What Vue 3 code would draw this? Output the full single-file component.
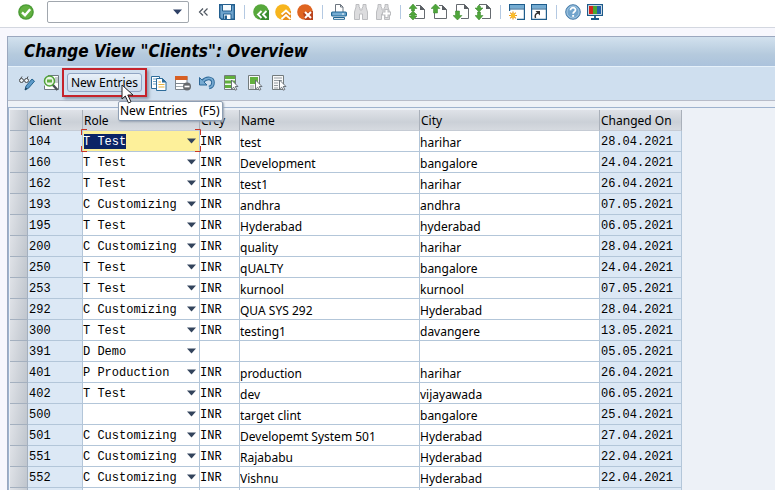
<script setup>
import { ref } from 'vue'

const command = ref('')
const roleOptions = ['', 'T Test', 'C Customizing', 'D Demo', 'P Production']

const T = 'T Test'
const C = 'C Customizing'
const rows = ref(
  [
    ['104', T, 'INR', 'test', 'harihar', '28.04.2021'],
    ['160', T, 'INR', 'Development', 'bangalore', '24.04.2021'],
    ['162', T, 'INR', 'test1', 'harihar', '26.04.2021'],
    ['193', C, 'INR', 'andhra', 'andhra', '07.05.2021'],
    ['195', T, 'INR', 'Hyderabad', 'hyderabad', '06.05.2021'],
    ['200', C, 'INR', 'quality', 'harihar', '28.04.2021'],
    ['250', T, 'INR', 'qUALTY', 'bangalore', '24.04.2021'],
    ['253', T, 'INR', 'kurnool', 'kurnool', '07.05.2021'],
    ['292', C, 'INR', 'QUA SYS 292', 'Hyderabad', '28.04.2021'],
    ['300', T, 'INR', 'testing1', 'davangere', '13.05.2021'],
    ['391', 'D Demo', '', '', '', '05.05.2021'],
    ['401', 'P Production', 'INR', 'production', 'harihar', '26.04.2021'],
    ['402', T, 'INR', 'dev', 'vijayawada', '06.05.2021'],
    ['500', '', 'INR', 'target clint', 'bangalore', '25.04.2021'],
    ['501', C, 'INR', 'Developemt System 501', 'Hyderabad', '27.04.2021'],
    ['551', C, 'INR', 'Rajababu', 'Hyderabad', '22.04.2021'],
    ['552', C, 'INR', 'Vishnu', 'Hyderabad', '22.04.2021'],
  ].map(([client, role, currency, name, city, changed]) => ({ client, role, currency, name, city, changed }))
)
</script>

<template>
  <main class="app">
    <header class="system-bar">
      <button class="icon" type="button" aria-label="Enter">
        <svg viewBox="0 0 16 16"><circle cx="8" cy="8" r="7.800" fill="#4a9b35" /><circle cx="8" cy="8" r="6.400" fill="#62b040" /><path d="M4 8.300l3 3 5.200-6" fill="none" stroke="#fff" stroke-width="2.400" /></svg>
      </button>
      <div class="command">
        <input v-model="command" type="text" aria-label="Command" />
        <button type="button" aria-label="Command history">
          <svg viewBox="0 0 9 6"><path d="M0 .5h9L4.500 5.500z" fill="#2f4166" /></svg>
        </button>
      </div>
      <button class="icon collapse" type="button" aria-label="Hide command field">
        <svg viewBox="0 0 16 16"><path d="M6 4.500L2.500 8 6 11.500M10.500 4.500L7 8l3.500 3.500" fill="none" stroke="#4d555f" stroke-width="1.200" /></svg>
      </button>
      <button class="icon" type="button" aria-label="Save">
        <svg viewBox="0 0 16 16"><path d="M.7.7h14.600v14.600H2.500L.7 13.500z" fill="#6ea3cd" stroke="#235f8f" stroke-width="1.400" /><path d="M3.500.5h9v6.500h-9z" fill="#f5fafd" stroke="#235f8f" /><path d="M4.500 10h7.500v5.500H4.500z" fill="#fff" stroke="#235f8f" /><path d="M5.500 11.500h2.500V15H5.500z" fill="#235f8f" /></svg>
      </button>
      <span class="sep"></span>
      <button class="icon" type="button" aria-label="Back">
        <svg viewBox="0 0 16 16"><circle cx="8" cy="8" r="7.800" fill="#57a83b" /><path d="M16 6v10H8A8 8 0 0 1 4 11z" fill="#398b2e" /><path d="M8.500 7L5 10.500 8.500 14M13.500 7L10 10.500l3.500 3.500" fill="none" stroke="#fff" stroke-width="1.900" /></svg>
      </button>
      <button class="icon" type="button" aria-label="Exit">
        <svg viewBox="0 0 16 16"><circle cx="8" cy="8" r="7.800" fill="#f7b51d" /><path d="M16 7v9H8l-2-6z" fill="#e98d19" /><path d="M6.500 10.500L11 6.500l4.500 4M6.500 15L11 11l4.500 4" fill="none" stroke="#fff" stroke-width="1.900" /></svg>
      </button>
      <button class="icon" type="button" aria-label="Cancel">
        <svg viewBox="0 0 16 16"><circle cx="8" cy="8" r="7.800" fill="#df6420" /><path d="M16 7v9H8l-2-7z" fill="#b9431d" /><path d="M8 8l6 6M14 8l-6 6" fill="none" stroke="#fff" stroke-width="2" /></svg>
      </button>
      <span class="sep"></span>
      <button class="icon" type="button" aria-label="Print">
        <svg viewBox="0 0 16 16"><path d="M4.500 8V.5h5l2.500 2.500V8" fill="#fff" stroke="#6d7680" /><path d="M9.500.5V3H12" fill="none" stroke="#6d7680" /><rect x=".6" y="8" width="14.800" height="4" rx="1" fill="#75acd2" stroke="#1f6593" stroke-width="1.200" /><path d="M2.500 13.500h11v1.800h-11z" fill="#fff" stroke="#1f6593" /><path d="M11 10h2" stroke="#fff" /></svg>
      </button>
      <button class="icon" type="button" aria-label="Find">
        <svg viewBox="0 0 16 16"><path d="M3 .5h3V3l1 1v2h2V4l1-1V.5h3V3l1.500 5v7.500h-5V10h-3v5.500h-5V8L3 3z" fill="#dcdcde" stroke="#bcbdc0" /></svg>
      </button>
      <button class="icon" type="button" aria-label="Find next">
        <svg viewBox="0 0 16 16"><path d="M3 .5h3V3l1 1v2h2V4l1-1V.5h3V3l1.500 5v7.500h-5V10h-3v5.500h-5V8L3 3z" fill="#dcdcde" stroke="#bcbdc0" /><path d="M11.500 5v9M7 9.500h9" stroke="#bcbdc0" stroke-width="4" /><path d="M11.500 6v7M8 9.500h7" stroke="#fff" stroke-width="2" /></svg>
      </button>
      <span class="sep"></span>
      <button class="icon" type="button" aria-label="First page">
        <svg viewBox="0 0 16 16"><path d="M7 1.500h4.500l4 4v9H6" fill="#fff" stroke="#666b70" /><path d="M11 1v5h5z" fill="#5b6065" /><path d="M4 0l4 4.500H5.500V7h-3V4.500H0zM4 7l4 4H5.500v1H8l-4 4-4-4h2.500v-1H0z" fill="#4fa63a" stroke="#37832a" stroke-width=".5" /></svg>
      </button>
      <button class="icon" type="button" aria-label="Previous page">
        <svg viewBox="0 0 16 16"><path d="M8 1.500h3.500l4 4v9h-12V9" fill="#fff" stroke="#666b70" /><path d="M11 1v5h5z" fill="#5b6065" /><path d="M4.500 0L9 4.500H6.500V9h-4V4.500H0z" fill="#4fa63a" stroke="#37832a" stroke-width=".5" /></svg>
      </button>
      <button class="icon" type="button" aria-label="Next page">
        <svg viewBox="0 0 16 16"><path d="M3.500 8V.5h8l4 4v10H8" fill="#fff" stroke="#666b70" /><path d="M11 0v5h5z" fill="#5b6065" /><path d="M4.500 16L9 11.500H6.500V7h-4v4.500H0z" fill="#4fa63a" stroke="#37832a" stroke-width=".5" /></svg>
      </button>
      <button class="icon" type="button" aria-label="Last page">
        <svg viewBox="0 0 16 16"><path d="M4 .5h7.500l4 4v10H7" fill="#fff" stroke="#666b70" /><path d="M11 0v5h5z" fill="#5b6065" /><path d="M4 1l1.500 1.500V4H8L4 8 0 4h2.500V2.500zM4 16l4-4.500H5.500V8h-3v3.500H0z" fill="#4fa63a" stroke="#37832a" stroke-width=".5" /></svg>
      </button>
      <span class="sep"></span>
      <button class="icon" type="button" aria-label="New session">
        <svg viewBox="0 0 16 16"><path d="M.6.6h14.800v14.800H.6z" fill="#fff" stroke="#1f5d8c" stroke-width="1.200" /><path d="M1 1h14v3.500H1z" fill="#75acd2" /><path d="M1 5h14" stroke="#1f5d8c" /><path d="M0 7h8v9H0z" fill="#fff" /><path d="M4 7.500v8M0 11.500h8M1.200 8.700l5.600 5.600M6.800 8.700l-5.600 5.600" stroke="#e99a22" stroke-width="1.200" /><circle cx="4" cy="11.500" r="2.300" fill="#fbbd25" /></svg>
      </button>
      <button class="icon" type="button" aria-label="Create shortcut">
        <svg viewBox="0 0 16 16"><path d="M.6.6h14.800v14.800H.6z" fill="#fff" stroke="#1f5d8c" stroke-width="1.200" /><path d="M1 1h14v3.500H1z" fill="#75acd2" /><path d="M1 5h14" stroke="#1f5d8c" /><path d="M4.500 14c-1-3 .5-5 3-5" fill="none" stroke="#333" stroke-width="1.500" /><path d="M4.500 7h4.500v4.500z" fill="#333" /></svg>
      </button>
      <span class="sep"></span>
      <button class="icon" type="button" aria-label="Help">
        <svg viewBox="0 0 16 16"><circle cx="8" cy="8" r="7.300" fill="#71a4cc" stroke="#4b7fab" /><circle cx="8" cy="8" r="6" fill="none" stroke="#b9d4e8" stroke-width=".7" /><path d="M5.500 6.200C5.500 2.700 10.700 3 10.500 6c0 1.700-2.400 1.800-2.400 3.700" fill="none" stroke="#fff" stroke-width="1.700" /><path d="M7.200 11h1.900v1.800H7.200z" fill="#fff" /></svg>
      </button>
      <button class="icon" type="button" aria-label="Customize local layout">
        <svg viewBox="0 0 16 16"><path d="M.6.6h14.800v10.800H.6z" fill="#fff" stroke="#1d5a89" stroke-width="1.200" /><path d="M2 2h4v8H2z" fill="#d3271c" /><path d="M6 2h4v8H6z" fill="#4aa832" /><path d="M10 2h4v8h-4z" fill="#2462a8" /><path d="M8 11.500v3M4 15h8" stroke="#1d5a89" stroke-width="1.800" /></svg>
      </button>
    </header>

    <section class="window">
      <h1>Change View "Clients": Overview</h1>

      <div class="app-bar">
        <button class="icon" type="button" aria-label="Display / Change">
          <svg viewBox="0 0 16 16"><path d="M1 4.500L3 1.500M7.500 4.500L9 1.500" stroke="#4a4d50" fill="none" /><circle cx="2.500" cy="5.500" r="2" fill="#eef4f9" stroke="#4a4d50" /><circle cx="7.500" cy="5.500" r="2" fill="#eef4f9" stroke="#4a4d50" /><path d="M6 15l1-4 6-7 2.500 2.200-6 7z" fill="#5d9ac9" stroke="#24638f" /><path d="M6 15l.7-2.500 1.500 1.300z" fill="#234" /></svg>
        </button>
        <button class="icon" type="button" aria-label="Details">
          <svg viewBox="0 0 16 16"><path d="M5 .5h10.500v14H1.500v-4" fill="#fff" stroke="#707880" /><path d="M12 3h3M12 5h3M12 7h3" stroke="#8b949c" /><path d="M9.500 9.500l5 5.500" stroke="#4b5157" stroke-width="2.500" /><circle cx="6.500" cy="6" r="5" fill="#eaf5e5" stroke="#51a23a" stroke-width="1.500" /><path d="M4 4.500h5v3H4z" fill="#62ae45" /></svg>
        </button>
        <div class="highlight">
          <button class="text-button" type="button" aria-describedby="new-entries-tip">New Entries</button>
          <svg class="pointer" viewBox="0 0 13 20" aria-hidden="true"><path d="M1 1v14l3.300-3 3.200 7 2.500-1.200-3.200-6.800H12z" fill="#fff" stroke="#222" /></svg>
          <span id="new-entries-tip" class="tooltip" role="tooltip"><span>New Entries</span><span>(F5)</span></span>
        </div>
        <button class="icon" type="button" aria-label="Copy as">
          <svg viewBox="0 0 16 16"><path d="M.5 1.500h8v12h-8z" fill="#fff" stroke="#2d6c9a" /><path d="M2 4h3M2 6.500h3M2 9h3" stroke="#6fa3c8" /><path d="M5.500 3.500h6l3.500 3.500v8.500H5.500z" fill="#fff" stroke="#2d6c9a" /><path d="M11 3v4.500h4.500z" fill="#2d6c9a" /><path d="M7.500 7h2.500M7.500 9.500h6M7.500 12h6" stroke="#e8b23f" /></svg>
        </button>
        <button class="icon" type="button" aria-label="Delete">
          <svg viewBox="0 0 16 16"><path d="M.5 1.500h11.500v13H.5z" fill="#fff" stroke="#7c858d" /><path d="M0 1h12.500v4H0z" fill="#d75f23" /><path d="M1 8.500h11" stroke="#7c858d" /><path d="M1 11.500h7" stroke="#a3abb1" /><circle cx="12" cy="11.500" r="4" fill="#66696d" /><path d="M9.500 11.500h5" stroke="#fff" stroke-width="1.700" /></svg>
        </button>
        <button class="icon" type="button" aria-label="Undo change">
          <svg viewBox="0 0 16 16"><path d="M3.500 6.500C8 1.500 14 3 14 7.500c0 2.500-1.500 4.500-4 5" fill="none" stroke="#2d6898" stroke-width="3.600" /><path d="M.5 2.500v7.500h7.500z" fill="#77aad1" stroke="#2d6898" /><path d="M3.500 6.500C8 1.500 14 3 14 7.500c0 2.500-1.500 4.500-4 5" fill="none" stroke="#77aad1" stroke-width="1.700" /></svg>
        </button>
        <button class="icon" type="button" aria-label="Select all">
          <svg viewBox="0 0 16 16"><path d="M1.500.5h11v14h-11z" fill="#f4f7f2" stroke="#737b7d" /><path d="M2 1h10v3H2zM2 5.500h10v3H2zM2 10h10v3H2z" fill="#62b03e" /><path d="M8.500 5l6.500 6.500h-2.700l1.500 3-1.600.7-1.500-3-2.200 2z" fill="#fff" stroke="#5f676e" stroke-width=".9" /></svg>
        </button>
        <button class="icon" type="button" aria-label="Select block">
          <svg viewBox="0 0 16 16"><path d="M1.500.5h11v14h-11z" fill="#f7f8f8" stroke="#737b7d" /><path d="M3 2h8v7H3z" fill="#62b03e" /><path d="M3 11h4M3 13h4" stroke="#969da2" /><path d="M8.500 5l6.500 6.500h-2.700l1.500 3-1.600.7-1.500-3-2.200 2z" fill="#fff" stroke="#5f676e" stroke-width=".9" /></svg>
        </button>
        <button class="icon" type="button" aria-label="Deselect all">
          <svg viewBox="0 0 16 16"><path d="M1.500.5h11v14h-11z" fill="#f7f8f8" stroke="#737b7d" /><path d="M3 3h8M3 5.500h8M3 8h4M3 10.500h4M3 13h4" stroke="#969da2" /><path d="M8.500 5l6.500 6.500h-2.700l1.500 3-1.600.7-1.500-3-2.200 2z" fill="#fff" stroke="#5f676e" stroke-width=".9" /></svg>
        </button>
      </div>

      <div class="grid-area">
        <table>
          <colgroup>
            <col class="c-sel" /><col class="c-client" /><col class="c-role" /><col class="c-cur" /><col class="c-text" /><col class="c-text" /><col class="c-date" />
          </colgroup>
          <thead>
            <tr>
              <td class="selector"></td>
              <th scope="col">Client</th>
              <th scope="col">Role</th>
              <th scope="col">Crcy</th>
              <th scope="col">Name</th>
              <th scope="col">City</th>
              <th scope="col">Changed On</th>
            </tr>
          </thead>
          <tbody>
            <tr v-for="(row, i) in rows" :key="row.client">
              <td class="selector"></td>
              <td class="fixed mono">{{ row.client }}</td>
              <td class="role mono" :class="{ active: i === 0 }">
                <select v-model="row.role" :aria-label="'Role of client ' + row.client">
                  <option v-for="option in roleOptions" :key="option" :value="option">{{ option }}</option>
                </select>
                <svg class="arrow" viewBox="0 0 9 6" aria-hidden="true"><path d="M0 .5h9L4.500 5.500z" fill="#33445c" /></svg>
                <svg v-if="i === 0" class="corners" viewBox="0 0 120 23" preserveAspectRatio="none" aria-hidden="true">
                  <path d="M.5 6V.5H6M114 .5h5.500V6M.5 17v5.500H6M114 22.500h5.500V17" />
                </svg>
              </td>
              <td class="mono"><input v-model="row.currency" type="text" :aria-label="'Currency of client ' + row.client" /></td>
              <td><input v-model="row.name" type="text" :aria-label="'Name of client ' + row.client" /></td>
              <td><input v-model="row.city" type="text" :aria-label="'City of client ' + row.client" /></td>
              <td class="fixed mono">{{ row.changed }}</td>
            </tr>
            <tr>
              <td class="selector"></td>
              <td class="fixed"></td><td></td><td></td><td></td><td></td>
              <td class="fixed"></td>
            </tr>
          </tbody>
        </table>
      </div>
    </section>
  </main>
</template>

<style>
body {
  overflow: hidden;
  background: #f7f7fd;
}
</style>

<style scoped>
.app {
  display: flex;
  flex-direction: column;
  height: 100vh;
  overflow: hidden;
  color: #000;
  font: 12px/20px "Noto Sans", "Open Sans", sans-serif;
}
button,
input,
select {
  margin: 0;
  padding: 0;
  border: 0;
  background: none;
  color: inherit;
  font: inherit;
}
svg {
  display: block;
}
.icon {
  flex: none;
  width: 16px;
  height: 16px;
}
.icon svg {
  width: 16px;
  height: 16px;
}

.system-bar {
  display: flex;
  flex: none;
  align-items: center;
  gap: 6px;
  height: 28px;
  padding: 0 18px 4px;
  box-sizing: border-box;
  background: #fff;
  border-bottom: 1px solid #d3d7e0;
}
.command {
  display: flex;
  flex: none;
  align-items: center;
  width: 142px;
  height: 22px;
  margin-left: 7px;
  box-sizing: border-box;
  border: 1px solid #a1a7ae;
  border-radius: 2px;
  background: #fff;
}
.command input {
  flex: 1;
  min-width: 0;
  padding-left: 4px;
}
.command button {
  padding: 6px;
}
.command svg {
  width: 9px;
  height: 6px;
}
.collapse {
  margin-left: 2px;
}
.sep {
  flex: none;
  width: 6px;
  height: 14px;
  background: linear-gradient(#b4c9e2, #b4c9e2) center / 1px 100% no-repeat;
}

.window {
  display: flex;
  flex: 1;
  flex-direction: column;
  min-height: 0;
  margin: 8px 0 0 7px;
  border-top: 1px solid #9ba8bf;
  border-left: 1px solid #9ba8bf;
  background: #edf1f7;
}
h1 {
  flex: none;
  margin: 0;
  padding-left: 16px;
  border-bottom: 1px solid #e6f1fa;
  background: linear-gradient(#d2e1ee, #b5cadd 60%, #abc2dc);
  font: italic bold 17px/29px "DejaVu Sans Condensed", "DejaVu Sans", sans-serif;
}
.app-bar {
  display: flex;
  flex: none;
  align-items: center;
  gap: 8px;
  height: 34px;
  padding: 0 11px 2px;
  box-sizing: border-box;
  border-bottom: 1px solid #b7bcc9;
  background: #cfdfef;
}
.highlight {
  position: relative;
  margin: 0 -4px 0 -5px;
  padding: 3px;
  border: 2px solid #c5232b;
  box-shadow: 2px 2px 3px #8b98a8;
}
.text-button {
  display: block;
  width: 75px;
  border: 1px solid #91a5c3;
  border-radius: 3px;
  background: linear-gradient(#e8f0f8, #cddcec);
  line-height: 17px;
  white-space: nowrap;
}
.pointer {
  position: absolute;
  z-index: 3;
  top: 14px;
  left: 57px;
  width: 13px;
  height: 20px;
}
.tooltip {
  position: absolute;
  z-index: 2;
  top: 31px;
  left: 54px;
  display: flex;
  gap: 12px;
  padding: 0 2px 0 1px;
  border: 1px solid #8f9fb4;
  border-radius: 2px;
  background: #fff;
  box-shadow: 1px 1px 2px #9aa5b3;
  line-height: 18px;
  white-space: nowrap;
}

.grid-area {
  flex: 1;
  min-height: 0;
  margin-top: 6px;
  padding: 2px 0 0 1px;
  border-top: 1px solid #9db2ce;
  border-left: 1px solid #9db2ce;
}
table {
  width: 672px;
  table-layout: fixed;
  border-collapse: separate;
  border-spacing: 0;
  font-size: 12px;
}
.c-sel { width: 18px; }
.c-client { width: 55px; }
.c-role { width: 117px; }
.c-cur { width: 40px; }
.c-text { width: 180px; }
.c-date { width: 82px; }
th,
td {
  height: 21px;
  padding: 2px 0 0 1px;
  box-sizing: border-box;
  border-right: 1px solid #b3c6d9;
  border-bottom: 1px solid #b3c6d9;
  background: #fff;
  line-height: 18px;
  text-align: left;
  white-space: nowrap;
}
td:has(input),
td.role {
  padding: 0;
}
td input,
.role select {
  display: block;
  width: 100%;
  height: 20px;
  padding-top: 2px;
  box-sizing: border-box;
  line-height: 18px;
}
thead th,
thead td {
  border-right-color: #a9b0ba;
  border-bottom-color: #c5cbd4;
  background: linear-gradient(#dfe2e8, #cbd0d7 60%, #d6dae0);
  font-weight: normal;
}
td.selector {
  padding: 0;
  border-color: #a4b0bf;
  background: linear-gradient(100deg, #dfe2e7, #bfc5cd);
}
td.fixed {
  background: #dce8f5;
}
.mono {
  font-family: "Liberation Mono", monospace;
}
.role {
  position: relative;
}
.role select {
  padding-right: 14px;
  appearance: none;
}
.role option {
  color: #000;
}
.arrow {
  position: absolute;
  top: 7px;
  right: 3px;
  width: 9px;
  height: 6px;
  pointer-events: none;
}
td.active {
  background: linear-gradient(#0b2466, #0b2466) 1px 3px / 42px 15px no-repeat #fdf09a;
}
.active select {
  color: #fff;
}
.corners {
  position: absolute;
  z-index: 1;
  inset: -2px;
  width: calc(100% + 4px);
  height: calc(100% + 3px);
  pointer-events: none;
}
.corners path {
  fill: none;
  stroke: #c93426;
  vector-effect: non-scaling-stroke;
}
</style>
